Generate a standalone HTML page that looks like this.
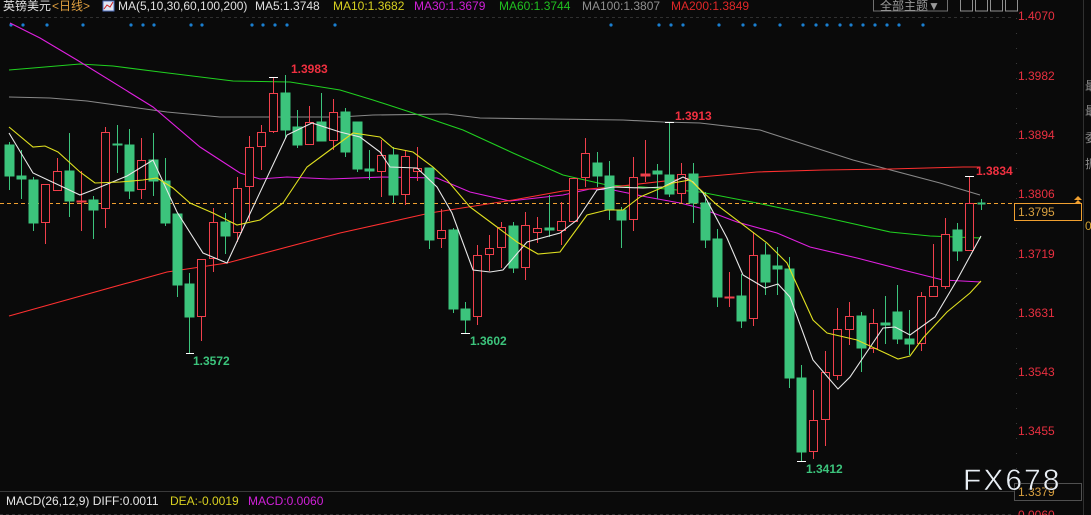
<!DOCTYPE html>
<html><head><meta charset="utf-8"><style>
html,body{margin:0;padding:0;background:#0a0a0a;width:1091px;height:515px;overflow:hidden}
svg{display:block}
text{font-family:"Liberation Sans","Noto Sans CJK SC",sans-serif}
</style></head><body>
<svg width="1091" height="515" viewBox="0 0 1091 515" xmlns="http://www.w3.org/2000/svg">
<rect width="1091" height="515" fill="#0a0a0a"/>
<text x="3" y="10" font-size="12" fill="#e0e0e0">英镑美元</text>
<text x="52" y="10" font-size="12" fill="#e0a040">&lt;日线&gt;</text>
<rect x="103" y="1" width="11" height="10" fill="#dfe6f2" stroke="#5070c0" stroke-width="1"/>
<polyline points="104,9 107,5 110,7 113,2" fill="none" stroke="#d02020" stroke-width="1"/>
<text x="118" y="10" font-size="12" fill="#e0e0e0">MA(5,10,30,60,100,200)</text>
<text x="255" y="10" font-size="12" fill="#e0e0e0">MA5:1.3748</text>
<text x="333" y="10" font-size="12" fill="#d8d020">MA10:1.3682</text>
<text x="414" y="10" font-size="12" fill="#d020d8">MA30:1.3679</text>
<text x="499" y="10" font-size="12" fill="#20c020">MA60:1.3744</text>
<text x="582" y="10" font-size="12" fill="#909090">MA100:1.3807</text>
<text x="671" y="10" font-size="12" fill="#e02828">MA200:1.3849</text>
<rect x="873.5" y="-1" width="74" height="12" fill="none" stroke="#707070"/>
<text x="880" y="10" font-size="12" fill="#9a9a9a">全部主题▼</text>
<g fill="none" stroke="#909090"><rect x="960.5" y="-1" width="12" height="12"/><rect x="975.5" y="-1" width="12" height="12"/><rect x="990.5" y="-1" width="12" height="12"/><rect x="1005.5" y="-1" width="12" height="12"/></g>
<line x1="0" y1="17.5" x2="1014" y2="17.5" stroke="#303030" stroke-dasharray="3,3"/>
<g fill="#1a7fd0">
<circle cx="11" cy="25" r="1.6"/><circle cx="23" cy="25" r="1.6"/><circle cx="47" cy="25" r="1.6"/><circle cx="83" cy="25" r="1.6"/><circle cx="131" cy="25" r="1.6"/><circle cx="143" cy="25" r="1.6"/><circle cx="154" cy="25" r="1.6"/><circle cx="191" cy="25" r="1.6"/><circle cx="202" cy="25" r="1.6"/><circle cx="252" cy="25" r="1.6"/><circle cx="263" cy="25" r="1.6"/><circle cx="275" cy="25" r="1.6"/><circle cx="287" cy="25" r="1.6"/><circle cx="335" cy="25" r="1.6"/><circle cx="611" cy="25" r="1.6"/><circle cx="659" cy="25" r="1.6"/><circle cx="671" cy="25" r="1.6"/><circle cx="683" cy="25" r="1.6"/><circle cx="719" cy="25" r="1.6"/><circle cx="743" cy="25" r="1.6"/><circle cx="755" cy="25" r="1.6"/><circle cx="780" cy="25" r="1.6"/><circle cx="803" cy="25" r="1.6"/><circle cx="816" cy="25" r="1.6"/><circle cx="827" cy="25" r="1.6"/><circle cx="840" cy="25" r="1.6"/><circle cx="851" cy="25" r="1.6"/><circle cx="863" cy="25" r="1.6"/><circle cx="875" cy="25" r="1.6"/><circle cx="887" cy="25" r="1.6"/><circle cx="899" cy="25" r="1.6"/><circle cx="923" cy="25" r="1.6"/>
</g>
<line x1="1016.5" y1="18" x2="1016.5" y2="480" stroke="#3a3a3a" stroke-dasharray="1,14"/>
<line x1="1083.5" y1="0" x2="1083.5" y2="515" stroke="#303030"/>
<g font-size="12" fill="#e83040">
<text x="1018" y="20">1.4070</text><text x="1018" y="80">1.3982</text><text x="1018" y="139">1.3894</text><text x="1018" y="198">1.3806</text><text x="1018" y="258">1.3719</text><text x="1018" y="317">1.3631</text><text x="1018" y="376">1.3543</text><text x="1018" y="435">1.3455</text>
</g>
<g font-size="12" fill="#8a8a8a"><text x="1085" y="90">最</text><text x="1085" y="115">最</text><text x="1085" y="142">委</text><text x="1085" y="168">振</text><text x="1085" y="230" fill="#d0a030">0</text></g>
<g fill="none" stroke-width="1.1">
<polyline stroke="#888" points="9,97 50,98 87,101 167,112 220,117 340,117 373,115 447,114 480,118 623,120 663,122 700,123 760,130 853,160 940,183 980,195"/>
<polyline stroke="#20d020" points="9,70 33,68 80,64 113,66 160,72 233,81 290,82 340,90 373,100 410,112 463,130 513,153 563,175 607,185 643,187 700,192 757,203 823,217 890,232 930,236 981,238"/>
<polyline stroke="#e020e0" points="10,23 40,38 77,60 153,107 200,147 240,173 260,179 287,177 330,179 383,177 437,178 470,192 510,201 563,195 590,189 613,190 647,197 680,203 700,208 737,222 777,233 810,247 857,258 903,270 943,280 981,282"/>
<polyline stroke="#ff3030" points="9,316 167,272 227,263 340,233 430,213 513,200 563,191 613,187 700,177 757,172 823,170 890,169 963,167 980,167"/>
</g>
<line x1="0" y1="203.5" x2="1014" y2="203.5" stroke="#f0a030" stroke-dasharray="4,3"/>
<g stroke-width="1">
<g stroke="#3cc47c" fill="#3cc47c">
<line x1="9.5" y1="142" x2="9.5" y2="190"/><rect x="5" y="145" width="9" height="31"/>
<line x1="21.5" y1="150" x2="21.5" y2="199"/><rect x="17" y="176" width="9" height="3"/>
<line x1="33.5" y1="177" x2="33.5" y2="231"/><rect x="29" y="180" width="9" height="43"/>
<line x1="69.5" y1="133" x2="69.5" y2="217"/><rect x="65" y="171" width="9" height="30"/>
<line x1="93.5" y1="196" x2="93.5" y2="239"/><rect x="89" y="200" width="9" height="10"/>
<line x1="117.5" y1="125" x2="117.5" y2="173"/><rect x="113" y="144" width="9" height="1"/>
<line x1="129.5" y1="129" x2="129.5" y2="199"/><rect x="125" y="145" width="9" height="46"/>
<line x1="153.5" y1="133" x2="153.5" y2="196"/><rect x="149" y="160" width="9" height="21"/>
<line x1="165.5" y1="158" x2="165.5" y2="226"/><rect x="161" y="181" width="9" height="42"/>
<line x1="177.5" y1="214" x2="177.5" y2="297"/><rect x="173" y="214" width="9" height="71"/>
<line x1="189.5" y1="273" x2="189.5" y2="353"/><rect x="185" y="284" width="9" height="33"/>
<line x1="225.5" y1="213" x2="225.5" y2="254"/><rect x="221" y="222" width="9" height="14"/>
<line x1="285.5" y1="75" x2="285.5" y2="139"/><rect x="281" y="93" width="9" height="37"/>
<line x1="297.5" y1="110" x2="297.5" y2="148"/><rect x="293" y="127" width="9" height="18"/>
<line x1="321.5" y1="93" x2="321.5" y2="141"/><rect x="317" y="122" width="9" height="19"/>
<line x1="345.5" y1="108" x2="345.5" y2="157"/><rect x="341" y="112" width="9" height="40"/>
<line x1="357.5" y1="122" x2="357.5" y2="172"/><rect x="353" y="122" width="9" height="47"/>
<line x1="369.5" y1="150" x2="369.5" y2="180"/><rect x="365" y="169" width="9" height="2"/>
<line x1="393.5" y1="147" x2="393.5" y2="203"/><rect x="389" y="155" width="9" height="40"/>
<line x1="429.5" y1="168" x2="429.5" y2="249"/><rect x="425" y="168" width="9" height="72"/>
<line x1="453.5" y1="228" x2="453.5" y2="313"/><rect x="449" y="230" width="9" height="79"/>
<line x1="465.5" y1="302" x2="465.5" y2="333"/><rect x="461" y="309" width="9" height="11"/>
<line x1="513.5" y1="222" x2="513.5" y2="273"/><rect x="509" y="226" width="9" height="42"/>
<line x1="549.5" y1="195" x2="549.5" y2="237"/><rect x="545" y="228" width="9" height="2"/>
<line x1="597.5" y1="152" x2="597.5" y2="187"/><rect x="593" y="163" width="9" height="13"/>
<line x1="609.5" y1="161" x2="609.5" y2="220"/><rect x="605" y="176" width="9" height="34"/>
<line x1="621.5" y1="207" x2="621.5" y2="248"/><rect x="617" y="210" width="9" height="10"/>
<line x1="657.5" y1="164" x2="657.5" y2="199"/><rect x="653" y="171" width="9" height="3"/>
<line x1="669.5" y1="122" x2="669.5" y2="197"/><rect x="665" y="175" width="9" height="19"/>
<line x1="693.5" y1="163" x2="693.5" y2="223"/><rect x="689" y="174" width="9" height="29"/>
<line x1="705.5" y1="192" x2="705.5" y2="248"/><rect x="701" y="203" width="9" height="37"/>
<line x1="717.5" y1="229" x2="717.5" y2="307"/><rect x="713" y="239" width="9" height="58"/>
<line x1="741.5" y1="274" x2="741.5" y2="328"/><rect x="737" y="296" width="9" height="25"/>
<line x1="765.5" y1="243" x2="765.5" y2="295"/><rect x="761" y="255" width="9" height="27"/>
<line x1="777.5" y1="247" x2="777.5" y2="295"/><rect x="773" y="266" width="9" height="3"/>
<line x1="789.5" y1="257" x2="789.5" y2="388"/><rect x="785" y="269" width="9" height="109"/>
<line x1="801.5" y1="365" x2="801.5" y2="461"/><rect x="797" y="378" width="9" height="74"/>
<line x1="861.5" y1="312" x2="861.5" y2="372"/><rect x="857" y="316" width="9" height="32"/>
<line x1="885.5" y1="296" x2="885.5" y2="344"/><rect x="881" y="323" width="9" height="2"/>
<line x1="897.5" y1="285" x2="897.5" y2="344"/><rect x="893" y="312" width="9" height="27"/>
<line x1="909.5" y1="310" x2="909.5" y2="355"/><rect x="905" y="339" width="9" height="5"/>
<line x1="957.5" y1="223" x2="957.5" y2="261"/><rect x="953" y="230" width="9" height="21"/>
<line x1="981.5" y1="199" x2="981.5" y2="210"/><rect x="978" y="203" width="7" height="1"/>
</g>
<g stroke="#f0404c" fill="#0a0a0a">
<line x1="45.5" y1="184" x2="45.5" y2="244"/><rect x="41.5" y="184.5" width="8" height="38"/>
<line x1="57.5" y1="158" x2="57.5" y2="191"/><rect x="53.5" y="171.5" width="8" height="19"/>
<line x1="81.5" y1="171" x2="81.5" y2="231"/><rect x="77" y="201" width="9" height="1" fill="#f0404c"/>
<line x1="105.5" y1="127" x2="105.5" y2="228"/><rect x="101.5" y="132.5" width="8" height="76"/>
<line x1="141.5" y1="138" x2="141.5" y2="199"/><rect x="137.5" y="160.5" width="8" height="29"/>
<line x1="201.5" y1="259" x2="201.5" y2="341"/><rect x="197.5" y="259.5" width="8" height="57"/>
<line x1="213.5" y1="208" x2="213.5" y2="272"/><rect x="209.5" y="222.5" width="8" height="36"/>
<line x1="237.5" y1="177" x2="237.5" y2="242"/><rect x="233.5" y="188.5" width="8" height="44"/>
<line x1="249.5" y1="136" x2="249.5" y2="221"/><rect x="245.5" y="147.5" width="8" height="39"/>
<line x1="261.5" y1="125" x2="261.5" y2="170"/><rect x="257.5" y="132.5" width="8" height="14"/>
<line x1="273.5" y1="77" x2="273.5" y2="133"/><rect x="269.5" y="93.5" width="8" height="38"/>
<line x1="309.5" y1="106" x2="309.5" y2="145"/><rect x="305.5" y="122.5" width="8" height="22"/>
<line x1="333.5" y1="99" x2="333.5" y2="150"/><rect x="329.5" y="112.5" width="8" height="28"/>
<line x1="381.5" y1="140" x2="381.5" y2="197"/><rect x="377.5" y="155.5" width="8" height="16"/>
<line x1="405.5" y1="150" x2="405.5" y2="205"/><rect x="401.5" y="156.5" width="8" height="38"/>
<line x1="417.5" y1="147" x2="417.5" y2="181"/><rect x="413.5" y="168.5" width="8" height="3"/>
<line x1="441.5" y1="209" x2="441.5" y2="248"/><rect x="437.5" y="230.5" width="8" height="8"/>
<line x1="477.5" y1="245" x2="477.5" y2="325"/><rect x="473.5" y="255.5" width="8" height="61"/>
<line x1="489.5" y1="235" x2="489.5" y2="271"/><rect x="485.5" y="248.5" width="8" height="6"/>
<line x1="501.5" y1="222" x2="501.5" y2="268"/><rect x="497.5" y="227.5" width="8" height="20"/>
<line x1="525.5" y1="212" x2="525.5" y2="280"/><rect x="521.5" y="225.5" width="8" height="42"/>
<line x1="537.5" y1="217" x2="537.5" y2="243"/><rect x="533.5" y="228.5" width="8" height="4"/>
<line x1="561.5" y1="202" x2="561.5" y2="245"/><rect x="557.5" y="221.5" width="8" height="9"/>
<line x1="573.5" y1="178" x2="573.5" y2="222"/><rect x="569.5" y="178.5" width="8" height="43"/>
<line x1="585.5" y1="138" x2="585.5" y2="187"/><rect x="581.5" y="153.5" width="8" height="24"/>
<line x1="633.5" y1="157" x2="633.5" y2="231"/><rect x="629.5" y="177.5" width="8" height="42"/>
<line x1="645.5" y1="140" x2="645.5" y2="182"/><rect x="641" y="174" width="9" height="2" fill="#f0404c"/>
<line x1="681.5" y1="163" x2="681.5" y2="203"/><rect x="677.5" y="174.5" width="8" height="19"/>
<line x1="729.5" y1="272" x2="729.5" y2="307"/><rect x="725" y="297" width="9" height="1" fill="#f0404c"/>
<line x1="753.5" y1="232" x2="753.5" y2="326"/><rect x="749.5" y="255.5" width="8" height="63"/>
<line x1="813.5" y1="390" x2="813.5" y2="459"/><rect x="809.5" y="420.5" width="8" height="31"/>
<line x1="825.5" y1="351" x2="825.5" y2="446"/><rect x="821.5" y="372.5" width="8" height="47"/>
<line x1="837.5" y1="308" x2="837.5" y2="380"/><rect x="833.5" y="329.5" width="8" height="46"/>
<line x1="849.5" y1="302" x2="849.5" y2="345"/><rect x="845.5" y="316.5" width="8" height="13"/>
<line x1="873.5" y1="309" x2="873.5" y2="353"/><rect x="869.5" y="323.5" width="8" height="25"/>
<line x1="921.5" y1="292" x2="921.5" y2="351"/><rect x="917.5" y="296.5" width="8" height="47"/>
<line x1="933.5" y1="244" x2="933.5" y2="297"/><rect x="929.5" y="286.5" width="8" height="10"/>
<line x1="945.5" y1="218" x2="945.5" y2="289"/><rect x="941.5" y="234.5" width="8" height="52"/>
<line x1="969.5" y1="176" x2="969.5" y2="251"/><rect x="965.5" y="203.5" width="8" height="47"/>
</g>
</g>
<g fill="none" stroke-width="1.1">
<polyline stroke="#e8e8e8" points="9,133 33,173 80,195 93,190 127,176 153,160 177,212 203,253 227,263 247,220 287,135 312,123 340,132 360,137 380,152 390,167 417,168 437,187 452,213 473,270 490,272 503,270 527,242 560,233 577,220 597,190 613,187 643,188 663,187 683,177 693,182 703,193 727,238 743,275 765,288 778,284 790,297 813,360 838,389 850,377 883,328 895,327 910,335 935,317 957,280 981,236"/>
<polyline stroke="#e0e020" points="9,127 33,147 45,146 58,152 80,172 95,183 120,182 143,180 157,178 173,188 190,203 213,213 237,225 260,220 283,203 307,167 330,150 353,133 380,137 393,148 413,152 433,167 447,180 470,207 497,227 517,242 538,254 560,252 587,215 607,210 623,210 640,197 673,183 690,180 717,205 767,243 787,263 813,320 827,333 857,340 883,352 898,359 910,356 923,338 947,312 970,293 981,281"/>
</g>
<g stroke="#ffffff" stroke-width="1">
<line x1="269" y1="77.5" x2="278" y2="77.5"/><line x1="186" y1="353.5" x2="194" y2="353.5"/><line x1="461" y1="333.5" x2="470" y2="333.5"/><line x1="665" y1="122.5" x2="674" y2="122.5"/><line x1="797" y1="461.5" x2="806" y2="461.5"/><line x1="965" y1="176.5" x2="974" y2="176.5"/>
</g>
<g font-size="12" font-weight="bold">
<text x="291" y="73" fill="#f03040">1.3983</text>
<text x="193" y="365" fill="#3cc47c">1.3572</text>
<text x="470" y="345" fill="#3cc47c">1.3602</text>
<text x="675" y="120" fill="#f03040">1.3913</text>
<text x="976" y="175" fill="#f03040">1.3834</text>
<text x="806" y="473" fill="#3cc47c">1.3412</text>
</g>
<rect x="1014.5" y="203.5" width="67" height="17" fill="#0a0a0a" stroke="#f0a030"/>
<text x="1018" y="216" font-size="12" fill="#d8a040">1.3795</text>
<polygon points="1074,200 1078,196 1082,200" fill="#f0a030"/><polygon points="1074,204 1078,200 1082,204" fill="#f0a030"/>
<line x1="0" y1="491.5" x2="1014" y2="491.5" stroke="#3a3a3a"/>
<rect x="1014.5" y="483.5" width="67" height="17" fill="#0a0a0a" stroke="#505050"/>
<text x="1018" y="496" font-size="12" fill="#d8a040">1.3379</text>
<text x="963" y="490" font-size="30" fill="#e8eef4" letter-spacing="2" stroke="#000" stroke-width="0.5">FX678</text>
<text x="6" y="505" font-size="12" fill="#e8e8e8">MACD(26,12,9) DIFF:0.0011</text>
<text x="170" y="505" font-size="12" fill="#d8d020">DEA:-0.0019</text>
<text x="248" y="505" font-size="12" fill="#d020d8">MACD:0.0060</text>
<text x="1018" y="519" font-size="12" fill="#e83040">0.0060</text>
<line x1="0" y1="514.5" x2="1014" y2="514.5" stroke="#303030" stroke-dasharray="3,3"/>
</svg>
</body></html>
